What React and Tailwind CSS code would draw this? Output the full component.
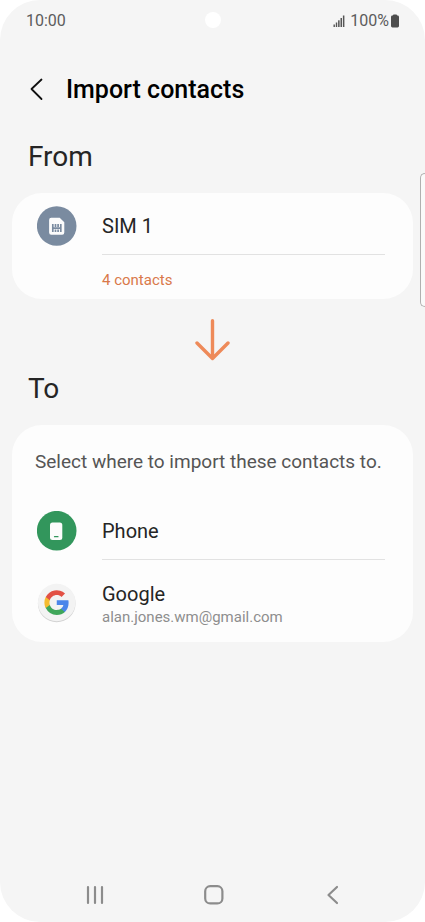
import React from "react";

function StatusBar() {
  return (
    <div className="relative flex h-10 items-center justify-between pt-px pr-[25px] pl-[26px] text-base text-[#5c5c5c]">
      <time>10:00</time>
      <span className="absolute top-3 left-1/2 size-4 -translate-x-1/2 rounded-full bg-white" />
      <div className="flex items-center">
        <svg className="mr-[5px]" width="12" height="12" viewBox="0 0 12 12" fill="#555555" role="img" aria-label="Signal">
          <rect x="0.5" y="9.5" width="1.4" height="2.5" />
          <rect x="2.8" y="7.5" width="1.4" height="4.5" />
          <rect x="5.1" y="5.3" width="1.5" height="6.7" />
          <rect x="7.5" y="3" width="1.5" height="9" />
          <rect x="9.9" y="0.5" width="1.5" height="11.5" />
        </svg>
        <span>100%</span>
        <svg className="ml-px" width="10" height="14" viewBox="0 0 10 14" fill="#4d4d4d" role="img" aria-label="Battery">
          <rect x="3" y="0.5" width="4" height="3" rx="0.8" />
          <rect x="1" y="1.6" width="8" height="11.8" rx="1.4" />
        </svg>
      </div>
    </div>
  );
}

function SimIcon() {
  return (
    <svg className="shrink-0" width="40" height="40" viewBox="0 0 40 40" aria-hidden="true">
      <circle cx="19.7" cy="20" r="19.8" fill="#7a8ba0" />
      <path d="M14.300 11.800h8.400l4.600 4.400v10.400a2.200 2.200 0 0 1-2.200 2.200H14.300a2.200 2.200 0 0 1-2.200-2.200V14a2.200 2.200 0 0 1 2.200-2.200z" fill="#fcfcfc" />
      <path d="M15.800 18v8M23.800 18v8M18.500 18v3M18.500 23.500v2.500M21.100 18v3M21.100 23.500v2.500M15.800 22.200h8" stroke="#7a8ba0" strokeWidth="1.700" fill="none" />
    </svg>
  );
}

function PhoneIcon() {
  return (
    <svg className="shrink-0" width="40" height="40" viewBox="0 0 40 40" aria-hidden="true">
      <circle cx="19.7" cy="19.700" r="19.8" fill="#32965c" />
      <rect x="13" y="11.500" width="12.300" height="17.500" rx="2.500" fill="#fcfcfc" />
      <path d="M17.500 25.700h3.500" stroke="#32965c" strokeWidth="1.2" strokeLinecap="round" />
    </svg>
  );
}

function GoogleIcon() {
  return (
    <svg className="shrink-0" width="40" height="40" viewBox="0 0 40 40" aria-hidden="true">
      <circle cx="19.7" cy="20.5" r="18.8" fill="#d2d2d2" />
      <circle cx="19.7" cy="19.5" r="18.8" fill="#f3f3f3" />
      <g transform="translate(7.400 7.200) scale(1.03)">
        <path fill="#4b86ea" d="M23.5 12.27c0-.85-.08-1.67-.22-2.45H12v4.64h6.45a5.52 5.52 0 0 1-2.39 3.62v3.01h3.87c2.26-2.09 3.57-5.17 3.57-8.82z" />
        <path fill="#3fa65a" d="M12 24c3.24 0 5.96-1.08 7.93-2.91l-3.87-3.01c-1.07.72-2.45 1.16-4.06 1.16-3.13 0-5.78-2.11-6.72-4.96H1.29v3.1A12 12 0 0 0 12 24z" />
        <path fill="#f5bb2f" d="M5.28 14.28A7.2 7.2 0 0 1 4.9 12c0-.79.14-1.56.38-2.28v-3.1H1.29A12 12 0 0 0 0 12c0 1.94.46 3.77 1.29 5.38z" />
        <path fill="#e25044" d="M12 4.76c1.76 0 3.35.61 4.6 1.8l3.43-3.43A11.98 11.98 0 0 0 1.29 6.62l3.99 3.1C6.22 6.87 8.87 4.76 12 4.76z" />
      </g>
    </svg>
  );
}

function SectionTitle({ children }) {
  return <h2 className="mb-[19px] pl-7 text-[28px] leading-[34px] text-[#252525]">{children}</h2>;
}

const card = "mx-3 rounded-[30px] bg-[#fdfdfd] pr-7 pl-[25px]";
const row = "flex w-full items-center gap-[25px] pt-1 text-left text-xl text-[#252525]";
const divider = "ml-[65px] h-px border-0 bg-[#e2e2e2]";

export default function App() {
  return (
    <div className="min-h-screen bg-white font-[Roboto,sans-serif]">
      <div className="relative flex min-h-screen flex-col overflow-hidden rounded-[40px] bg-[#f5f5f5]">
        <StatusBar />
        <header className="flex h-[100px] items-center pl-6">
          <button type="button" aria-label="Back" className="flex size-6 items-center justify-center">
            <svg width="24" height="24" viewBox="0 0 24 24" fill="none" stroke="#111111" strokeWidth="1.8" strokeLinecap="round" strokeLinejoin="round">
              <path d="M17.500 1.500L7.500 11l10 10" />
            </svg>
          </button>
          <h1 className="ml-[18px] text-[25px] font-medium text-black">Import contacts</h1>
        </header>

        <main>
          <SectionTitle>From</SectionTitle>
          <section className={card}>
            <div className={`${row} h-[61px]`}>
              <SimIcon />
              <span>SIM 1</span>
            </div>
            <hr className={divider} />
            <p className="flex h-11 items-center pt-1.5 pl-[65px] text-[15px] text-[#d9794a]">4 contacts</p>
          </section>

          <div className="flex h-[73px] items-center justify-center pt-2">
            <svg width="36" height="42" viewBox="0 0 36 42" fill="none" stroke="#ee8a59" strokeWidth="3.4" strokeLinecap="round" strokeLinejoin="round" aria-hidden="true">
              <path d="M17.500 1.800v37.700M2 24L17.500 39.500l15.500-15.500" />
            </svg>
          </div>

          <SectionTitle>To</SectionTitle>
          <section className={card}>
            <p className="-ml-0.5 flex h-[73px] items-center pt-0.5 whitespace-nowrap text-[19px] text-[#555555]">
              Select where to import these contacts to.
            </p>
            <button type="button" className={`${row} h-[61px]`}>
              <PhoneIcon />
              <span>Phone</span>
            </button>
            <hr className={divider} />
            <button type="button" className={`${row} h-[82px]`}>
              <GoogleIcon />
              <span className="flex flex-col pt-1">
                <span className="leading-6">Google</span>
                <span className="text-[15px] leading-[22px] text-[#8e8e8e]">alan.jones.wm@gmail.com</span>
              </span>
            </button>
          </section>
        </main>

        <nav className="mt-auto flex h-[54px] items-center pr-8 pl-[35px]">
          <button type="button" aria-label="Recent apps" className="flex flex-1 justify-center">
            <svg width="20" height="20" viewBox="0 0 20 20" stroke="#8c8c8c" strokeWidth="2.2" strokeLinecap="round">
              <path d="M3 2v16M10 2v16M17 2v16" />
            </svg>
          </button>
          <button type="button" aria-label="Home" className="flex flex-1 justify-center">
            <svg width="20" height="20" viewBox="0 0 20 20" fill="none" stroke="#8c8c8c" strokeWidth="2.2">
              <rect x="1.2" y="1.2" width="17.2" height="17.2" rx="5" />
            </svg>
          </button>
          <button type="button" aria-label="Back" className="flex flex-1 justify-center">
            <svg width="20" height="20" viewBox="0 0 20 20" fill="none" stroke="#8c8c8c" strokeWidth="2.2" strokeLinecap="round" strokeLinejoin="round">
              <path d="M14 2L5.500 10l8.500 8" />
            </svg>
          </button>
        </nav>

        <div className="absolute top-[173px] right-0 h-[134px] w-[5px] rounded-l-[5px] border border-r-0 border-[#b0b0b0] bg-[#fafafa]" />
      </div>
    </div>
  );
}
